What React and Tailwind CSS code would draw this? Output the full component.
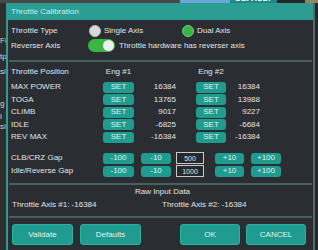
import React from 'react';

const font = { fontFamily: '"Liberation Sans", Arial, sans-serif' };

const Btn = ({ children, className = '' }) => (
    <div className={`flex items-center justify-center rounded-[3px] bg-[#1f9b90] text-[#e3f3ef] ${className}`}>
        {children}
    </div>
);

const positions = [
    ['MAX POWER', '16384', '16384'],
    ['TOGA', '13765', '13988'],
    ['CLIMB', '9017', '9227'],
    ['IDLE', '-6825', '-6684'],
    ['REV MAX', '-16384', '-16384'],
];

const gaps = [
    ['CLB/CRZ Gap', '500'],
    ['Idle/Reverse Gap', '1000'],
];

const Separator = () => <div className="h-[2px] bg-[#46605e] mx-[1px]" />;

export default function App() {
    return (
        <div className="w-[318px] h-[250px] overflow-hidden flex flex-col bg-[#272a2e] text-[8px] leading-none text-[#e2e4e4]" style={font}>
            {/* strip of the window behind */}
            <div className="h-[3px] flex shrink-0">
                <div className="w-[180px] bg-[#4a4744]" />
                <div className="w-[50px] bg-[#6aa6d8]" />
                <div className="w-[47px] bg-[#1d8a83] overflow-hidden flex justify-center">
                    <span className="text-[8px] text-white -mt-[5px] font-bold">DEFAULT</span>
                </div>
                <div className="w-[28px] bg-[#25282b]" />
                <div className="flex-1 bg-[#97855f]" />
            </div>

            <div className="flex flex-1 min-h-0">
                {/* page behind the dialog */}
                <div className="w-[6px] shrink-0 overflow-hidden bg-[#302e2c] text-[#d6d6d6] flex flex-col whitespace-nowrap">
                    <span className="mt-[34px]">Fi</span>
                    <span className="mt-[8px]">tp</span>
                    <span className="mt-[7px]">si</span>
                    <span className="mt-[24px]">g</span>
                    <span className="mt-[5px]">l</span>
                    <span className="mt-[2px]">sil</span>
                </div>

                {/* dialog */}
                <div className="w-[309px] shrink-0 flex flex-col bg-[#2a2e33] border-l-2 border-r-2 border-l-[#2b9f95] border-r-[#566a69]">
                    <div className="h-[17px] shrink-0 bg-[#2c9d93] flex items-center pl-[3px] text-[#d4ece7]">
                        Throttle Calibration
                    </div>

                    <div className="pt-[3px] pb-[7px] pl-[3px]">
                        <div className="h-[15px] flex items-center">
                            <span className="w-[78px]">Throttle Type</span>
                            <span className="w-[12px] h-[12px] rounded-full bg-[#d8d8d8] border border-[#bdbdbd]" />
                            <span className="ml-[3px] w-[78px]">Single Axis</span>
                            <span className="w-[12px] h-[12px] rounded-full bg-[#35b54a] border border-[#6fd07c]" />
                            <span className="ml-[3px]">Dual Axis</span>
                        </div>
                        <div className="h-[15px] flex items-center">
                            <span className="w-[77px]">Reverser Axis</span>
                            <span className="w-[27px] h-[13px] rounded-full bg-[#3cb545] flex items-center justify-end pr-[1px]">
                                <span className="w-[11px] h-[11px] rounded-full bg-[#eef0ef]" />
                            </span>
                            <span className="ml-[4px]">Throttle hardware has reverser axis</span>
                        </div>
                    </div>

                    <Separator />

                    <div className="pt-[4px] pb-[5.5px] pl-[3px]">
                        <div className="h-[12px] flex items-center">
                            <span className="w-[92px]">Throttle Position</span>
                            <span className="w-[31px] text-center">Eng #1</span>
                            <span className="w-[62px]" />
                            <span className="w-[30px] text-center">Eng #2</span>
                        </div>
                        <div className="h-[3px]" />
                        {positions.map(([name, a, b]) => (
                            <div key={name} className="h-[12.5px] flex items-center">
                                <span className="w-[92px]">{name}</span>
                                <Btn className="w-[31px] h-[11px]">SET</Btn>
                                <span className="w-[42px] text-right">{a}</span>
                                <span className="w-[20px]" />
                                <Btn className="w-[30px] h-[11px]">SET</Btn>
                                <span className="w-[34px] text-right">{b}</span>
                            </div>
                        ))}
                        <div className="h-[8px]" />
                        {gaps.map(([name, v]) => (
                            <div key={name} className="h-[13px] flex items-center">
                                <span className="w-[92px]">{name}</span>
                                <Btn className="w-[31px] h-[11px]">-100</Btn>
                                <Btn className="ml-[7px] w-[30px] h-[11px]">-10</Btn>
                                <div className="ml-[5px] w-[28px] h-[12px] border border-[#c9c9c9] bg-[#26292d] flex items-center justify-center text-[7px]">{v}</div>
                                <Btn className="ml-[11px] w-[29px] h-[11px]">+10</Btn>
                                <Btn className="ml-[7px] w-[30px] h-[11px]">+100</Btn>
                            </div>
                        ))}
                    </div>

                    <Separator />

                    <div className="pt-[1px] pb-[5px]">
                        <div className="h-[11px] flex items-center justify-center pl-[4px]">Raw Input Data</div>
                        <div className="h-[2px]" />
                        <div className="h-[12px] flex items-center pl-[4px]">
                            <span className="w-[150px]">Throttle Axis #1: -16384</span>
                            <span>Throttle Axis #2: -16384</span>
                        </div>
                    </div>

                    <Separator />

                    <div className="pt-[6px] flex pl-[4px]">
                        <Btn className="w-[61px] h-[21px] border border-[#2bb0a4]">Validate</Btn>
                        <Btn className="ml-[7px] w-[61px] h-[21px] border border-[#2bb0a4]">Defaults</Btn>
                        <Btn className="ml-[39px] w-[60px] h-[21px] border border-[#2bb0a4]">OK</Btn>
                        <Btn className="ml-[6px] w-[60px] h-[21px] border border-[#2bb0a4]">CANCEL</Btn>
                    </div>
                </div>

                <div className="flex-1 bg-[#24272b]" />
            </div>
        </div>
    );
}
